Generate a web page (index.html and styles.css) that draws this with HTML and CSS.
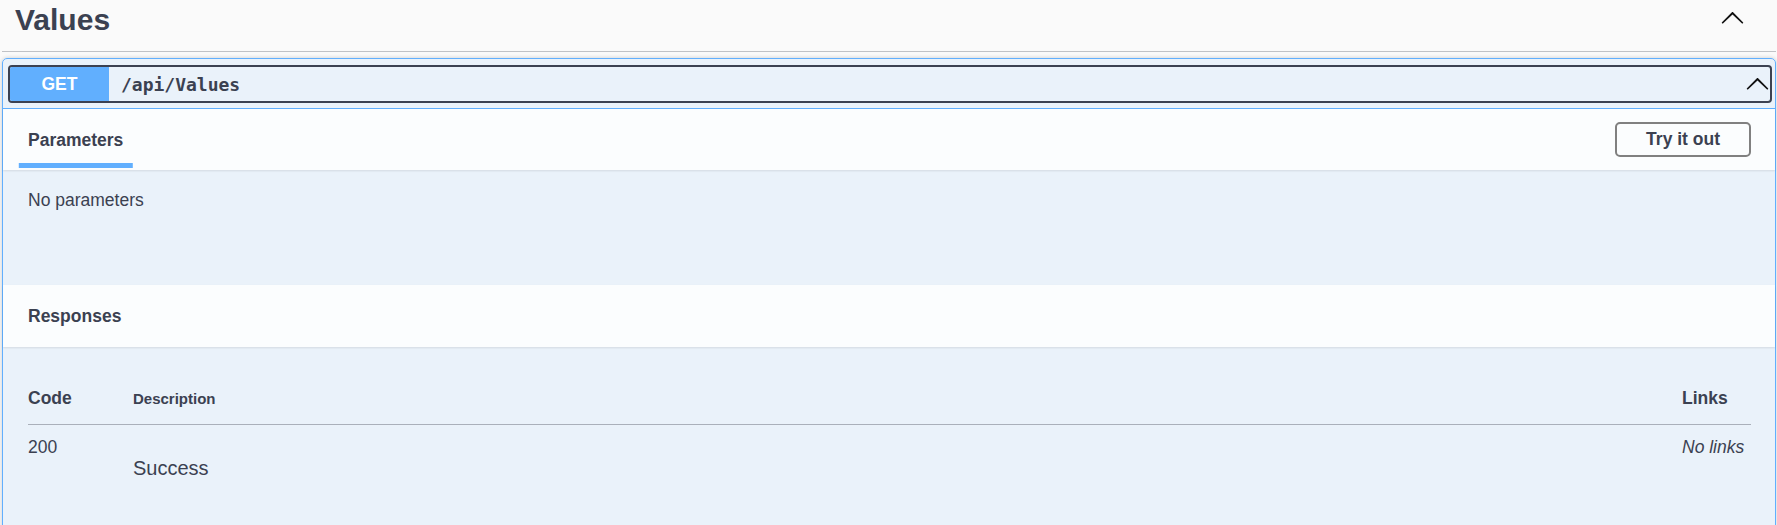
FILE: index.html
```html
<!DOCTYPE html>
<html lang="en">
<head>
<meta charset="utf-8">
<title>Values</title>
<link rel="stylesheet" href="styles.css">
</head>
<body>
<div class="tag-section">
  <h3 class="tag-header">
    <span class="tag-title">Values</span>
    <button class="expand" aria-label="Collapse operation">
      <svg viewBox="0 0 20 20" width="25" height="25"><path transform="rotate(180 10 10)" d="M17.418 6.109c.272-.268.709-.268.979 0s.271.701 0 .969l-7.908 7.83c-.27.268-.707.268-.979 0l-7.908-7.83c-.27-.268-.27-.701 0-.969.271-.268.709-.268.979 0L10 13.25l7.418-7.141z"/></svg>
    </button>
  </h3>
  <div class="opblock">
    <div class="summary">
      <div class="summary-control">
        <span class="method">GET</span>
        <span class="path">/api/Values</span>
        <svg class="arrow" viewBox="0 0 20 20" width="25" height="25"><path transform="rotate(180 10 10)" d="M17.418 6.109c.272-.268.709-.268.979 0s.271.701 0 .969l-7.908 7.83c-.27.268-.707.268-.979 0l-7.908-7.83c-.27-.268-.27-.701 0-.969.271-.268.709-.268.979 0L10 13.25l7.418-7.141z"/></svg>
      </div>
    </div>
    <div class="opblock-body">
      <div class="section-header">
        <h4 class="tab-title">Parameters</h4>
        <button class="try-out">Try it out</button>
      </div>
      <div class="params">
        <p>No parameters</p>
      </div>
      <div class="section-header responses-header">
        <h4 class="plain-title">Responses</h4>
      </div>
      <div class="responses-inner">
        <table class="responses-table">
          <thead>
            <tr>
              <th class="col-code">Code</th>
              <th class="col-desc">Description</th>
              <th class="col-links">Links</th>
            </tr>
          </thead>
          <tbody>
            <tr>
              <td class="col-code">200</td>
              <td class="col-desc"><p>Success</p></td>
              <td class="col-links"><i>No links</i></td>
            </tr>
          </tbody>
        </table>
      </div>
    </div>
  </div>
</div>
</body>
</html>
```

FILE: styles.css
```css
html, body {
  margin: 0;
  background: #fafafa;
  overflow: hidden;
}

body {
  font-family: "Liberation Sans", Arial, sans-serif;
  color: #3b4151;
}

.tag-section {
  margin: 0 1px 0 2px;
}

.tag-header {
  display: flex;
  align-items: flex-start;
  justify-content: space-between;
  margin: 0;
  padding: 5px 31px 16px 13px;
  border-bottom: 1px solid rgba(59, 65, 81, 0.3);
  font-size: 30px;
  line-height: 30px;
  font-weight: 700;
}

.expand {
  border: 0;
  background: none;
  padding: 0;
  margin-top: 1px;
  width: 25px;
  height: 25px;
}

.expand svg,
.arrow {
  display: block;
  fill: #111;
}

.opblock {
  margin-top: 6px;
  border: 1px solid #61affe;
  border-radius: 5px;
  background: rgba(97, 175, 254, 0.1);
  box-shadow: 0 0 4px rgba(0, 0, 0, 0.19);
}

.summary {
  padding: 6px 3px 5px 5px;
  border-bottom: 1px solid #61affe;
}

.summary-control {
  display: flex;
  align-items: center;
  height: 34px;
  border: 2px solid #3b4151;
  border-radius: 4px;
}

.method {
  width: 99px;
  height: 34px;
  display: flex;
  align-items: center;
  justify-content: center;
  background: #61affe;
  color: #fff;
  font-weight: 700;
  font-size: 17.5px;
  border-radius: 2px 0 0 2px;
}

.path {
  margin-left: 12px;
  font-family: "DejaVu Sans Mono", "Liberation Mono", monospace;
  font-weight: 700;
  font-size: 18px;
  color: #3b4151;
}

.arrow {
  margin-left: auto;
}

.section-header {
  display: flex;
  align-items: center;
  justify-content: space-between;
  height: 61px;
  padding: 0 25px;
  background: rgba(255, 255, 255, 0.8);
  box-shadow: 0 1px 2px rgba(0, 0, 0, 0.1);
  position: relative;
}

.tab-title,
.plain-title {
  margin: 0;
  font-size: 17.5px;
  line-height: 20px;
  font-weight: 700;
}

.tab-title {
  position: relative;
}

.tab-title::after {
  content: "";
  position: absolute;
  left: 50%;
  transform: translateX(-50%);
  width: 120%;
  height: 5px;
  bottom: -18.75px;
  background: #61affe;
}

.try-out {
  height: 35px;
  padding: 0 29px 0 29px;
  border: 2px solid #808080;
  border-radius: 5px;
  background: transparent;
  font-family: "Liberation Sans", Arial, sans-serif;
  font-weight: 700;
  font-size: 17.5px;
  color: #3b4151;
  margin-right: -1px;
}

.params {
  height: 115px;
  box-sizing: border-box;
  padding: 20px 25px 0;
}

.params p {
  margin: 0;
  font-size: 17.5px;
  line-height: 20px;
}

.responses-header {
  height: 62px;
}

.responses-inner {
  padding: 25px 24px 80px 25px;
}

.responses-table {
  width: 100%;
  border-collapse: separate;
  border-spacing: 0;
}

.responses-table th {
  text-align: left;
  padding: 16px 0;
  font-size: 17.5px;
  line-height: 20px;
  font-weight: 700;
  vertical-align: baseline;
  border-bottom: 1px solid #aab0ba;
}

.responses-table th.col-desc {
  font-size: 15px;
  padding-bottom: 15px;
}

.responses-table .col-code {
  width: 105px;
}

.responses-table .col-links {
  width: 69px;
}

.responses-table td {
  padding: 12px 0 0;
  font-size: 17.5px;
  line-height: 20px;
  vertical-align: top;
}

.responses-table td.col-desc p {
  margin: 20px 0 0;
  font-size: 20px;
  line-height: 23px;
}
```
